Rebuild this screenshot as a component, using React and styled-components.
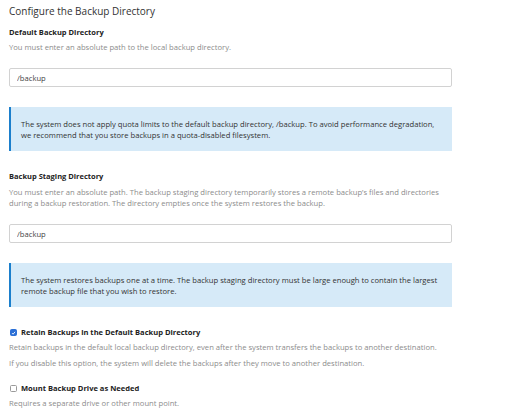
import React from 'react';
import styled, { createGlobalStyle } from 'styled-components';

const GlobalStyle = createGlobalStyle`
  body {
    margin: 0;
    background: #fff;
    font-family: "Open Sans", "Liberation Sans", sans-serif;
    color: #333;
  }
`;

const Page = styled.div`
  width: 443px;
  padding: 4px 9px 0;
`;

const Title = styled.h2`
  margin: 0;
  font-size: 10px;
  line-height: 14px;
  font-weight: 400;
  color: #333;
`;

const Field = styled.div`
  margin-top: ${(p) => p.$top || 20}px;
`;

const Label = styled.div`
  font-size: 7.5px;
  line-height: 11px;
  font-weight: 700;
  color: #222;
`;

const Help = styled.p`
  margin: ${(p) => p.$top || 4}px 0 0;
  font-size: 7.65px;
  line-height: 11px;
  color: #8c8c8c;
`;

const Input = styled.input`
  display: block;
  box-sizing: border-box;
  width: 100%;
  height: 19px;
  margin-top: 15px;
  padding: 0 7px;
  border: 1px solid #d2d2d2;
  border-radius: 2px;
  font-family: inherit;
  font-size: 7.65px;
  color: #444;
  background: #fff;
  outline: none;
`;

const Callout = styled.div`
  margin-top: 20px;
  padding: 12px 10px 10px;
  border-left: 2px solid #1b7fcc;
  background: #d6eaf8;
  font-size: 7.65px;
  line-height: 11px;
  color: #333;
`;

const CheckRow = styled.label`
  display: flex;
  align-items: center;
  gap: 4px;
  font-size: 7.55px;
  line-height: 11px;
  font-weight: 700;
  color: #222;
`;

const Box = styled.span`
  box-sizing: border-box;
  width: 7px;
  height: 7px;
  margin-left: 1px;
  border-radius: 1.5px;
  display: flex;
  align-items: center;
  justify-content: center;
  background: ${(p) => (p.$checked ? '#2a6fd6' : '#fff')};
  border: 1px solid ${(p) => (p.$checked ? '#2a6fd6' : '#9a9a9a')};
`;

const Check = ({ checked }) => (
  <Box $checked={checked}>
    {checked && (
      <svg width="6" height="6" viewBox="0 0 10 10">
        <path d="M2 5.2 L4.2 7.4 L8.2 2.6" fill="none" stroke="#fff" strokeWidth="1.8" />
      </svg>
    )}
  </Box>
);

export default function App() {
  return (
    <Page>
      <GlobalStyle />
      <Title>Configure the Backup Directory</Title>

      <Field $top={9}>
        <Label>Default Backup Directory</Label>
        <Help>You must enter an absolute path to the local backup directory.</Help>
        <Input defaultValue="/backup" />
        <Callout>
          The system does not apply quota limits to the default backup directory, /backup. To avoid performance degradation,
          <br />
          we recommend that you store backups in a quota-disabled filesystem.
        </Callout>
      </Field>

      <Field>
        <Label>Backup Staging Directory</Label>
        <Help $top={5}>
          You must enter an absolute path. The backup staging directory temporarily stores a remote backup’s files and directories
          <br />
          during a backup restoration. The directory empties once the system restores the backup.
        </Help>
        <Input defaultValue="/backup" />
        <Callout>
          The system restores backups one at a time. The backup staging directory must be large enough to contain the largest
          <br />
          remote backup file that you wish to restore.
        </Callout>
      </Field>

      <Field>
        <CheckRow>
          <Check checked />
          Retain Backups in the Default Backup Directory
        </CheckRow>
        <Help>Retain backups in the default local backup directory, even after the system transfers the backups to another destination.</Help>
        <Help $top={5}>If you disable this option, the system will delete the backups after they move to another destination.</Help>
      </Field>

      <Field $top={14}>
        <CheckRow>
          <Check />
          Mount Backup Drive as Needed
        </CheckRow>
        <Help>Requires a separate drive or other mount point.</Help>
      </Field>
    </Page>
  );
}
